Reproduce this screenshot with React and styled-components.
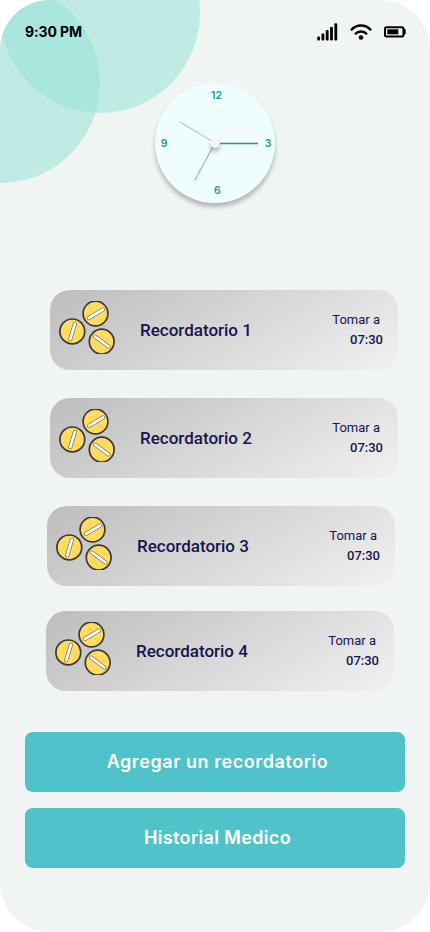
import React from "react";
import styled, { createGlobalStyle } from "styled-components";

const GlobalStyle = createGlobalStyle`
  * { box-sizing: border-box; }
  body { margin: 0; background: #fff; }
`;

const Screen = styled.main`
  position: relative;
  display: flex;
  flex-direction: column;
  width: 430px;
  height: 932px;
  overflow: hidden;
  border-radius: 50px;
  background: #f0f4f3;
  font-family: Inter, sans-serif;
`;

const Bubble = styled.div`
  position: absolute;
  left: ${(p) => p.$left}px;
  top: ${(p) => p.$top}px;
  width: 200px;
  height: 200px;
  border-radius: 50%;
  background: rgba(143, 225, 215, 0.5);
`;

const StatusBar = styled.header`
  position: relative;
  display: flex;
  align-items: center;
  justify-content: space-between;
  height: 63px;
  padding: 0 24px 0 25px;
`;

const Clock = styled.time`
  font-size: 14px;
  font-weight: 700;
  letter-spacing: -0.1px;
  white-space: nowrap;
  color: #000;
`;

const StatusIcons = styled.div`
  display: flex;
  align-items: center;
  gap: 12px;

  svg { display: block; }
`;

const Dial = styled.div`
  position: relative;
  width: 120px;
  height: 120px;
  margin: 20px auto 0;
  border-radius: 50%;
  background: #f0fdff;
  box-shadow: 0 4px 4px rgba(0, 0, 0, 0.25);

  svg { display: block; overflow: visible; }
  text {
    font: 600 10.5px Inter, sans-serif;
    fill: #2c9298;
    text-anchor: middle;
  }
`;

const Reminders = styled.section`
  display: flex;
  flex-direction: column;
  padding-top: 87px;
`;

const Card = styled.article`
  display: flex;
  align-items: center;
  width: 348px;
  height: 80px;
  margin: 0 0 ${(p) => p.$gap}px ${(p) => p.$left}px;
  padding: 0 15px 0 9px;
  border-radius: 20px;
  background: linear-gradient(149deg, #bdbdbd, #f1f1f1);
  color: #15154f;
  font-family: Roboto, sans-serif;

  svg { display: block; flex: none; margin-top: -5px; }
`;

const CardTitle = styled.h2`
  flex: 1;
  margin: 0 0 0 25px;
  font-size: 17px;
  line-height: 20px;
  font-weight: 500;
`;

const Schedule = styled.div`
  display: flex;
  flex-direction: column;
  align-items: flex-end;
  font-size: 13px;
  line-height: 20px;
`;

const Caption = styled.span`
  margin-right: 3px;
`;

const Hour = styled.span`
  font-weight: 500;
`;

const Actions = styled.footer`
  display: flex;
  flex-direction: column;
  gap: 16px;
  padding: 41px 25px 0;
`;

const ActionButton = styled.button`
  height: 60px;
  padding: 0 0 1px;
  border: 0;
  border-radius: 8px;
  background: #50c2c9;
  color: #fff;
  font: 600 18px Inter, sans-serif;
  letter-spacing: ${(p) => p.$tracking}px;
  text-indent: 5px;
`;

const Signal = () => (
  <svg width="21" height="18" viewBox="0 0 21 18">
    <rect x="0.2" y="13.6" width="2.8" height="4" rx="1" />
    <rect x="4.5" y="10.4" width="2.8" height="7.2" rx="1" />
    <rect x="8.8" y="7" width="2.8" height="10.6" rx="1" />
    <rect x="13.1" y="3.7" width="2.8" height="13.9" rx="1" />
    <rect x="17.4" y="0.3" width="2.8" height="17.3" rx="1" />
  </svg>
);

const Wifi = () => (
  <svg width="22" height="18" viewBox="0 0 22 18" fill="none" stroke="#000" strokeWidth="2.4">
    <path d="M1 7.2C6.6 1 15.4 1 21 7.2M5 11.2C8.4 7.5 13.6 7.5 17 11.2" />
    <circle cx="11" cy="14.5" r="2.3" fill="#000" stroke="none" />
  </svg>
);

const Battery = () => (
  <svg width="22" height="12" viewBox="0 0 22 12">
    <rect x="1" y="1.2" width="18.4" height="9.2" rx="1.5" fill="none" stroke="#000" strokeWidth="2" />
    <path d="M19 1.5L21.7 3.8V7.8L19 10.1Z" />
    <rect x="3.3" y="3.3" width="11" height="5" />
  </svg>
);

const PILLS = [
  { cx: 36.5, cy: 12.5, slot: "M29.8 17L44 8.5" },
  { cx: 13.3, cy: 30.4, slot: "M11.2 38.3L16 22.7" },
  { cx: 42.7, cy: 40.6, slot: "M36 35.5L49.5 45.5" },
];

const Pills = () => (
  <svg width="56" height="53" viewBox="0 0 56 53" strokeLinecap="round">
    {PILLS.map((pill) => (
      <g key={pill.slot}>
        <circle cx={pill.cx} cy={pill.cy} r="12.4" fill="#ffdc60" stroke="#3b3838" strokeWidth="1.7" />
        <path d={pill.slot} stroke="#6a6250" strokeWidth="4" />
        <path d={pill.slot} stroke="#fff" strokeWidth="2.7" />
      </g>
    ))}
  </svg>
);

const DialFace = () => (
  <svg width="120" height="120" viewBox="0 0 120 120" fill="none">
    <text x="61.5" y="16.4">12</text>
    <text x="113" y="64.3">3</text>
    <text x="62.3" y="111.2">6</text>
    <text x="9.2" y="64.3">9</text>
    <path d="M60 60L24.5 38.7" stroke="#c4c4c4" strokeWidth="1.2" />
    <path d="M60 60L39.7 97.5" stroke="#78c7cc" strokeWidth="1.3" />
    <path d="M60 60.5H103" stroke="#2c9298" strokeWidth="1.5" />
    <circle cx="60" cy="60" r="5" fill="#f0f4f3" filter="url(#hub-shadow)" />
    <defs>
      <filter id="hub-shadow" x="-100%" y="-100%" width="300%" height="300%" colorInterpolationFilters="sRGB">
        <feDropShadow dx="0" dy="4" stdDeviation="2" floodOpacity="0.25" />
      </filter>
    </defs>
  </svg>
);

const REMINDERS = [
  { id: 1, left: 50, gap: 28 },
  { id: 2, left: 50, gap: 28 },
  { id: 3, left: 47, gap: 25 },
  { id: 4, left: 46, gap: 0 },
];

export default function App() {
  return (
    <>
      <GlobalStyle />
      <Screen>
        <Bubble $left={0} $top={-87} />
        <Bubble $left={-100} $top={-17} />
        <StatusBar>
          <Clock>9:30 PM</Clock>
          <StatusIcons>
            <Signal />
            <Wifi />
            <Battery />
          </StatusIcons>
        </StatusBar>
        <Dial><DialFace /></Dial>
        <Reminders>
          {REMINDERS.map(({ id, left, gap }) => (
            <Card key={id} $left={left} $gap={gap}>
              <Pills />
              <CardTitle>Recordatorio {id}</CardTitle>
              <Schedule>
                <Caption>Tomar a</Caption>
                <Hour>07:30</Hour>
              </Schedule>
            </Card>
          ))}
        </Reminders>
        <Actions>
          <ActionButton $tracking={0.57}>Agregar un recordatorio</ActionButton>
          <ActionButton $tracking={0.35}>Historial Medico</ActionButton>
        </Actions>
      </Screen>
    </>
  );
}
